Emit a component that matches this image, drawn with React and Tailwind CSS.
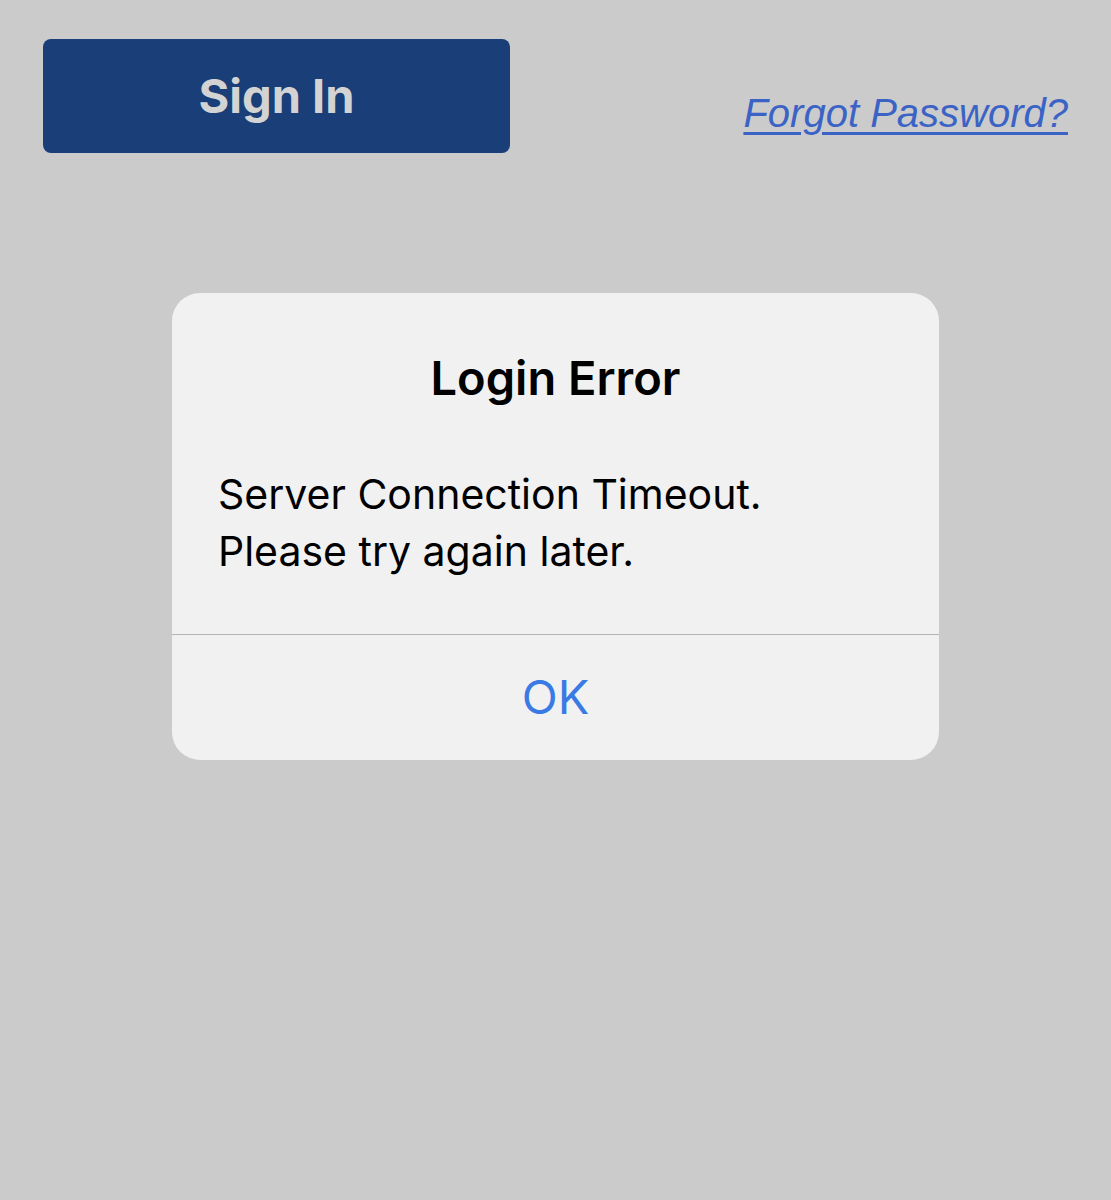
export default function App() {
  return (
    <div className="min-h-[1200px] w-full bg-[#cbcbcb] font-['Inter',sans-serif]">
      {/* Top row */}
      <div className="flex items-start justify-between pt-[39px] pl-[43px] pr-[43px]">
        <button className="flex h-[114px] w-[467px] items-center justify-center rounded-[8px] bg-[#1a3e77] text-[47px] font-bold text-[#d3d3d3]">
          Sign In
        </button>
        <a
          href="#"
          className="mt-[50px] font-['Liberation_Sans',sans-serif] text-[40px] leading-[48px] italic text-[#3b63c6] underline decoration-[3px] underline-offset-[5px]"
        >
          Forgot Password?
        </a>
      </div>

      {/* Alert */}
      <div className="mx-auto mt-[140px] flex w-[767px] flex-col rounded-[28px] bg-[#f1f1f1]">
        <div className="px-[46px] pt-[58px] pb-[54px]">
          <h2 className="text-center text-[47px] leading-[54px] font-semibold text-black">
            Login Error
          </h2>
          <p className="mt-[61px] text-[41px] leading-[57px] text-black">
            Server Connection Timeout.
            <br />
            Please try again later.
          </p>
        </div>
        <div className="h-px bg-[#b4b4b4]" />
        <button className="flex h-[125px] items-center justify-center text-[47px] text-[#3a7ae4]">
          OK
        </button>
      </div>
    </div>
  );
}
